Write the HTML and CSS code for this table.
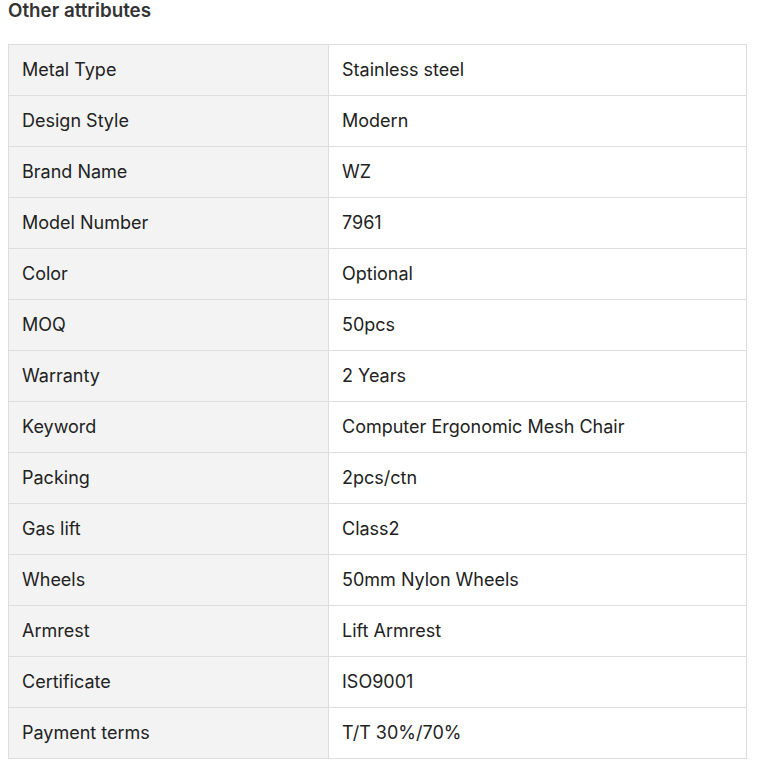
FILE: index.html
```html
<!DOCTYPE html>
<html>
<head>
<meta charset="utf-8">
<link rel="stylesheet" href="styles.css">
</head>
<body>
<h3 class="title">Other attributes</h3>
<table class="attrs">
<tr><td class="k">Metal Type</td><td class="v">Stainless steel</td></tr>
<tr><td class="k">Design Style</td><td class="v">Modern</td></tr>
<tr><td class="k">Brand Name</td><td class="v">WZ</td></tr>
<tr><td class="k">Model Number</td><td class="v">7961</td></tr>
<tr><td class="k">Color</td><td class="v">Optional</td></tr>
<tr><td class="k">MOQ</td><td class="v">50pcs</td></tr>
<tr><td class="k">Warranty</td><td class="v">2 Years</td></tr>
<tr><td class="k">Keyword</td><td class="v">Computer Ergonomic Mesh Chair</td></tr>
<tr><td class="k">Packing</td><td class="v">2pcs/ctn</td></tr>
<tr><td class="k">Gas lift</td><td class="v">Class2</td></tr>
<tr><td class="k">Wheels</td><td class="v">50mm Nylon Wheels</td></tr>
<tr><td class="k">Armrest</td><td class="v">Lift Armrest</td></tr>
<tr><td class="k">Certificate</td><td class="v">ISO9001</td></tr>
<tr><td class="k">Payment terms</td><td class="v">T/T 30%/70%</td></tr>
</table>
</body>
</html>
```
FILE: styles.css
```css
html, body {
  margin: 0;
  padding: 0;
  background: #fff;
}
body {
  padding: 0 8px;
  font-family: Inter, "Noto Sans", sans-serif;
  color: #222;
}
.title {
  margin: 0;
  font-size: 18.8px;
  line-height: 22px;
  font-weight: 600;
  color: #333;
}
.attrs {
  margin-top: 22px;
  width: 739px;
  border-collapse: collapse;
  table-layout: fixed;
}
.attrs td {
  border: 1px solid #ddd;
  height: 51px;
  padding: 0 0 2px 13px;
  font-size: 18px;
  color: #222;
  vertical-align: middle;
  box-sizing: border-box;
}
.attrs td.k {
  width: 320px;
  background: #f3f3f3;
}
```
